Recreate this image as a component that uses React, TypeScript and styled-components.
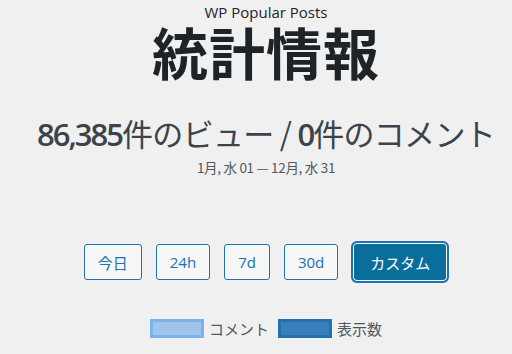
import {FC} from "react";
import styled, {createGlobalStyle} from "styled-components";

const GlobalStyle = createGlobalStyle`
	html,
	body {
		margin: 0;
		padding: 0;
		background: #f0f0f1;
		font-family: "Open Sans", "Noto Sans CJK JP", sans-serif;
	}
`;

const Page = styled.div`
	box-sizing: border-box;
	width: 512px;
	height: 354px;
	padding-left: 20px;
	overflow: hidden;
	display: flex;
	flex-direction: column;
	align-items: center;
	text-align: center;
`;

const PluginName = styled.div`
	margin-top: 2px;
	font-size: 15px;
	line-height: 20px;
	color: #1d2327;
`;

const Heading = styled.h1`
	margin: 3px 0 0;
	font-family: "Noto Sans CJK JP", sans-serif;
	font-weight: 700;
	font-size: 56px;
	line-height: 52px;
	letter-spacing: 1px;
	color: #1d2327;
`;

const Totals = styled.div`
	margin-top: 36px;
	font-family: "Noto Sans CJK JP", sans-serif;
	font-size: 31px;
	line-height: 40px;
	color: #3c434a;
	letter-spacing: -0.7px;

	strong {
		font-family: "Open Sans", sans-serif;
		font-weight: 600;
		letter-spacing: -2px;
	}
`;

const DateRange = styled.div`
	margin-top: 4px;
	font-family: "Noto Sans CJK JP", sans-serif;
	font-size: 13.5px;
	line-height: 18px;
	color: #50575e;
	letter-spacing: -0.3px;
`;

const Ranges = styled.div`
	margin-top: 66px;
	display: flex;
	gap: 14px;
	align-items: center;
`;

const RangeButton = styled.button<{$active?: boolean}>`
	box-sizing: border-box;
	height: ${(p) => (p.$active ? "40px" : "36px")};
	padding: 0 ${(p) => (p.$active ? "17px" : "13px")};
	border-radius: ${(p) => (p.$active ? "5px" : "3px")};
	border: 1px solid #2271b1;
	background: ${(p) => (p.$active ? "#0a6e9d" : "#f6f7f7")};
	color: ${(p) => (p.$active ? "#ffffff" : "#2271b1")};
	box-shadow: ${(p) => (p.$active ? "inset 0 0 0 1px #ffffff, 0 0 0 1px #2271b1" : "none")};
	font-family: "Open Sans", "Noto Sans CJK JP", sans-serif;
	font-size: 15px;
	cursor: pointer;
`;

const Legend = styled.div`
	margin-top: 36px;
	display: flex;
	align-items: center;
	gap: 9px;
	font-family: "Noto Sans CJK JP", sans-serif;
	font-size: 15px;
	color: #50575e;
`;

const LegendItem = styled.div`
	display: flex;
	align-items: center;
	gap: 5px;
`;

const Swatch = styled.span<{$fill: string; $edge: string}>`
	box-sizing: border-box;
	width: 54px;
	height: 19px;
	background: ${(p) => p.$fill};
	border: 3px solid ${(p) => p.$edge};
`;

const ranges = ["今日", "24h", "7d", "30d"];

const App: FC = () => {
	return (
		<Page>
			<GlobalStyle />
			<PluginName>WP Popular Posts</PluginName>
			<Heading>統計情報</Heading>
			<Totals>
				<strong>86,385</strong>件のビュー / <strong>0</strong>件のコメント
			</Totals>
			<DateRange>1月, 水 01 — 12月, 水 31</DateRange>
			<Ranges>
				{ranges.map((r) => (
					<RangeButton key={r}>{r}</RangeButton>
				))}
				<RangeButton $active>カスタム</RangeButton>
			</Ranges>
			<Legend>
				<LegendItem>
					<Swatch $fill="#a0c4ea" $edge="#7ab3e8" />
					コメント
				</LegendItem>
				<LegendItem>
					<Swatch $fill="#3a7fbc" $edge="#2271b1" />
					表示数
				</LegendItem>
			</Legend>
		</Page>
	);
};

export default App;
